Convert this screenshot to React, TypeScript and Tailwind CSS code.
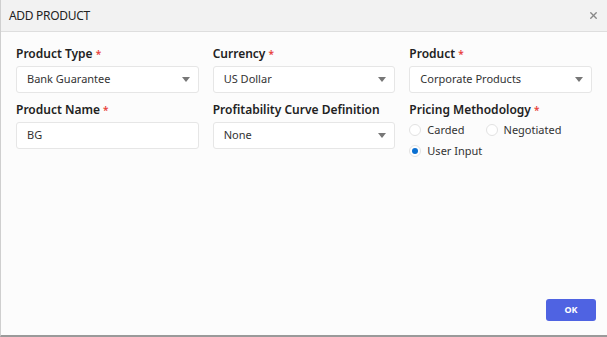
import { X } from "lucide-react";

const font = { fontFamily: '"Noto Sans", "Open Sans", sans-serif' };

function Label({ text, req }: { text: string; req?: boolean }) {
  return (
    <div className="text-[12px] font-semibold text-[#222] leading-[16px] mb-[4px]">
      {text}
      {req && <span className="text-[#e8403a] text-[10px] align-top ml-[3px]">*</span>}
    </div>
  );
}

function Select({ value }: { value: string }) {
  return (
    <div className="h-[27px] flex items-center justify-between pl-[10px] pr-[8px] bg-white border border-[#e6e6e6] rounded-[3px] text-[11px] text-[#333]">
      <span>{value}</span>
      <span className="w-0 h-0 border-l-[4px] border-r-[4px] border-t-[5px] border-l-transparent border-r-transparent border-t-[#777]" />
    </div>
  );
}

function Input({ value }: { value: string }) {
  return (
    <div className="h-[27px] flex items-center pl-[10px] bg-white border border-[#e6e6e6] rounded-[3px] text-[11px] text-[#333]">
      {value}
    </div>
  );
}

function Radio({ label, checked }: { label: string; checked?: boolean }) {
  return (
    <label className="flex items-center gap-[6px] text-[11px] text-[#333]">
      <span className="w-[12px] h-[12px] rounded-full border border-[#e2e2e2] bg-white flex items-center justify-center">
        {checked && <span className="w-[6px] h-[6px] rounded-full bg-[#0a6fd1]" />}
      </span>
      {label}
    </label>
  );
}

export default function App() {
  return (
    <div style={font} className="w-[607px] h-[337px] bg-[#fcfcfc] border-l border-[#cfcfcf] border-b-2 border-b-[#9a9a9a] flex flex-col">
      {/* header */}
      <div className="h-[32px] bg-[#f2f2f2] border-b border-[#dedede] flex items-center justify-between pl-[8px] pr-[8px]">
        <span className="text-[12px] text-[#222] tracking-[-0.3px]">ADD PRODUCT</span>
        <X size={11} strokeWidth={3} className="text-[#888]" />
      </div>

      {/* body */}
      <div className="flex-1 px-[15px] pt-[14px] grid grid-cols-3 gap-x-[14px] content-start">
        <div>
          <Label text="Product Type" req />
          <Select value="Bank Guarantee" />
        </div>
        <div>
          <Label text="Currency" req />
          <Select value="US Dollar" />
        </div>
        <div>
          <Label text="Product" req />
          <Select value="Corporate Products" />
        </div>

        <div className="mt-[9px]">
          <Label text="Product Name" req />
          <Input value="BG" />
        </div>
        <div className="mt-[9px]">
          <Label text="Profitability Curve Definition" />
          <Select value="None" />
        </div>
        <div className="mt-[9px]">
          <Label text="Pricing Methodology" req />
          <div className="flex gap-x-[21px] mt-[2px]">
            <Radio label="Carded" />
            <Radio label="Negotiated" />
          </div>
          <div className="mt-[4px]">
            <Radio label="User Input" checked />
          </div>
        </div>
      </div>

      {/* footer */}
      <div className="flex justify-end pr-[11px] pb-[14px]">
        <button className="w-[50px] h-[22px] rounded-[3px] bg-[#4f63e2] text-white text-[9px] font-bold">
          OK
        </button>
      </div>
    </div>
  );
}
